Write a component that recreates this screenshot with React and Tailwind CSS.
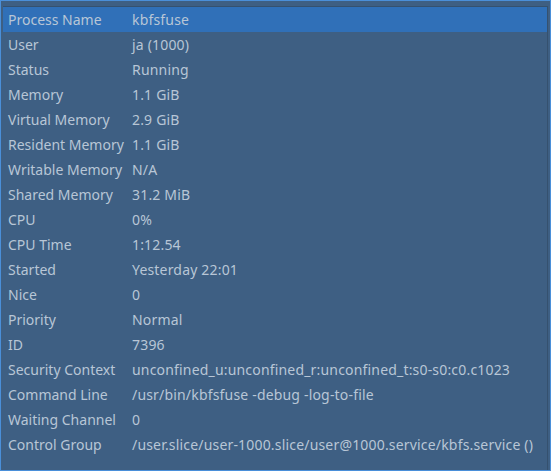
export default function App() {
  const rows = [
    ["Process Name", "kbfsfuse"],
    ["User", "ja (1000)"],
    ["Status", "Running"],
    ["Memory", "1.1 GiB"],
    ["Virtual Memory", "2.9 GiB"],
    ["Resident Memory", "1.1 GiB"],
    ["Writable Memory", "N/A"],
    ["Shared Memory", "31.2 MiB"],
    ["CPU", "0%"],
    ["CPU Time", "1:12.54"],
    ["Started", "Yesterday 22:01"],
    ["Nice", "0"],
    ["Priority", "Normal"],
    ["ID", "7396"],
    ["Security Context", "unconfined_u:unconfined_r:unconfined_t:s0-s0:c0.c1023"],
    ["Command Line", "/usr/bin/kbfsfuse -debug -log-to-file"],
    ["Waiting Channel", "0"],
    ["Control Group", "/user.slice/user-1000.slice/user@1000.service/kbfs.service ()"],
  ];
  return (
    <div
      className="w-[551px] h-[471px] border border-[#4a8fd9] bg-[#3e5f83] pt-[5px] pl-[2px] pr-[2px] text-[14px] text-[#b8c6d6]"
      style={{ fontFamily: '"Noto Sans", sans-serif' }}
    >
      <div className="h-full border-t border-r border-[#35516f]">
        {rows.map(([k, v], i) => (
          <div
            key={k}
            className={`flex h-[25px] items-center leading-none ${i === 0 ? "bg-[#3070b8]" : ""}`}
          >
            <div className="w-[129px] pl-[5px] shrink-0">{k}</div>
            <div className="whitespace-nowrap tracking-[0.18px]">{v}</div>
          </div>
        ))}
      </div>
    </div>
  );
}
